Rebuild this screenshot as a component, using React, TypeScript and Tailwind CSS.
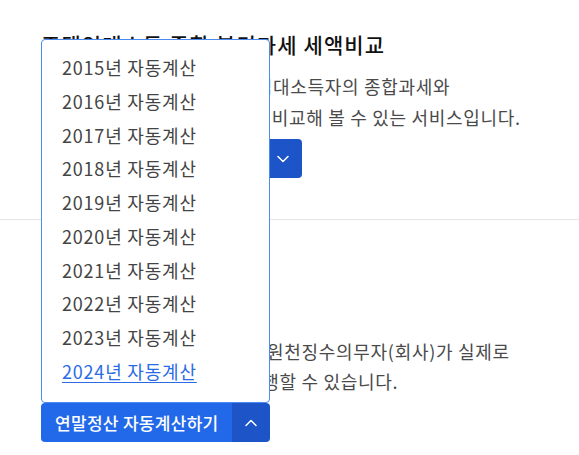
import React from "react";

const years = [2015, 2016, 2017, 2018, 2019, 2020, 2021, 2022, 2023, 2024];

function Chevron({ up = false }: { up?: boolean }) {
    return (
        <svg width="12" height="8" viewBox="0 0 12 8" fill="none" className="block">
            <polyline
                points={up ? "1,6.5 6,1.5 11,6.5" : "1,1.5 6,6.5 11,1.5"}
                stroke="white"
                strokeWidth="1.5"
                strokeLinecap="round"
                strokeLinejoin="round"
            />
        </svg>
    );
}

export default function App() {
    return (
        <div className="min-h-screen w-full bg-white text-[#222] font-['Noto_Sans_CJK_KR','Noto_Sans',sans-serif]">
            {/* 주택임대소득 */}
            <section className="px-[41px] pt-[29px] pb-[41px] border-b border-[#e6e6e6]">
                <h2 className="text-[21px] leading-[30px] font-medium tracking-[1.1px] text-[#111]">
                    주택임대소득 종합 분리과세 세액비교
                </h2>
                <p className="mt-[12px] text-[18px] leading-[30.5px] tracking-[0.7px] text-[#4a4a4a]">
                    <span className="block whitespace-nowrap">2주택 이상을 보유하는 주택임대소득자의 종합과세와</span>
                    <span className="block whitespace-nowrap">분리과세 적용 세액을 한 눈에 비교해 볼 수 있는 서비스입니다.</span>
                </p>
                <div className="mt-[7px] inline-flex h-[39px] rounded-[4px] overflow-hidden text-white">
                    <button className="flex items-center pl-[14px] pr-[13px] bg-[#2269e9] text-[17px] tracking-[0.3px] font-medium">
                        주택임대소득 세액비교하기
                    </button>
                    <button className="flex w-[39px] items-center justify-center bg-[#1d55c8]">
                        <Chevron />
                    </button>
                </div>
            </section>

            {/* 연말정산 */}
            <section className="px-[41px] pt-[74px] pb-[40px]">
                <h2 className="text-[21px] leading-[30px] font-medium tracking-[1.1px] text-[#111]">연말정산 자동계산</h2>
                <p className="mt-[12px] text-[18px] leading-[30px] tracking-[0.7px] text-[#4a4a4a]">
                    <span className="block whitespace-nowrap">쉽게 입력한 자료를 바탕으로 원천징수의무자(회사)가 실제로</span>
                    <span className="block whitespace-nowrap">하는 방식처럼 연말정산을 진행할 수 있습니다.</span>
                </p>
                <div className="relative mt-[7px] inline-flex">
                    <div className="absolute bottom-full left-0 z-10 w-full rounded-[4px] border border-[#4d8af0] bg-white pt-[11px] pb-[13.5px]">
                        <ul>
                            {years.map((y) => (
                                <li key={y} className="pl-[20px] text-[18px] leading-[33.75px] tracking-[0.8px]">
                                    {y === 2024 ? (
                                        <a href="#" className="text-[#2b6be6] underline underline-offset-[3px]">
                                            {y}년 자동계산
                                        </a>
                                    ) : (
                                        <a href="#" className="text-[#444]">
                                            {y}년 자동계산
                                        </a>
                                    )}
                                </li>
                            ))}
                        </ul>
                    </div>
                    <div className="flex h-[39px] rounded-[4px] overflow-hidden text-white">
                        <button className="flex items-center pl-[14px] pr-[13px] bg-[#2269e9] text-[17px] tracking-[0.3px] font-medium">
                            연말정산 자동계산하기
                        </button>
                        <button className="flex w-[38px] items-center justify-center bg-[#1d55c8]">
                            <Chevron up />
                        </button>
                    </div>
                </div>
            </section>
        </div>
    );
}
